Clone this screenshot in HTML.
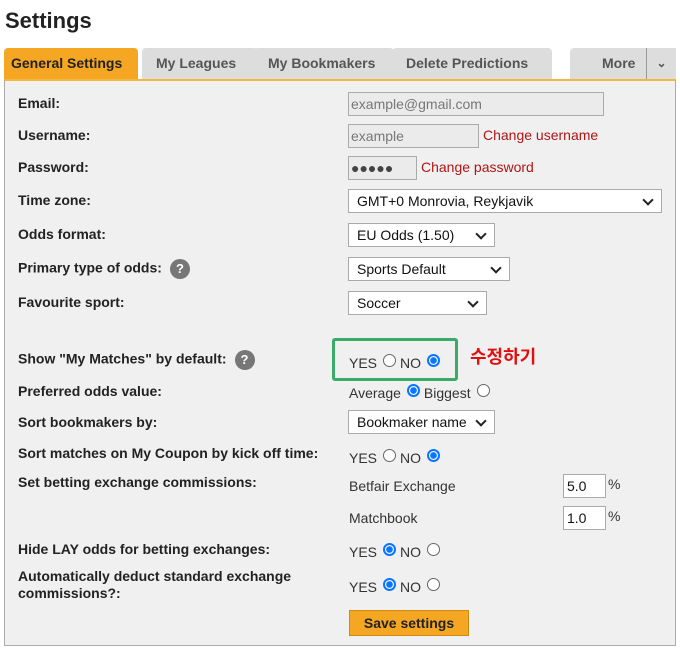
<!DOCTYPE html>
<html><head><meta charset="utf-8"><style>
*{box-sizing:border-box;margin:0;padding:0}
body{width:680px;height:652px;background:#fff;font-family:"Liberation Sans",Arial,sans-serif;position:relative;overflow:hidden;color:#222}
.a{position:absolute;white-space:nowrap}
h1{position:absolute;left:5px;top:8px;font-size:22px;font-weight:bold;color:#222}
.tab{position:absolute;top:48px;height:32px;background:#ddd;color:#555;font-weight:bold;font-size:14px;line-height:30px;padding-left:14px;border-radius:4px 4px 0 0}
.panel{position:absolute;left:4px;top:79px;width:672px;height:567px;background:#f0f0f0;border:1px solid #aaa;border-top:2px solid #f5b73b}
.l{position:absolute;left:18px;font-weight:bold;font-size:14px;color:#222;white-space:nowrap}
.in{position:absolute;height:24px;border:1px solid #aaa;background:#ebebeb;color:#777;font-size:14px;line-height:22px;padding-left:2px}
.sel{position:absolute;height:24px;border:1px solid #aaa;background:#fff;color:#111;font-size:14px;line-height:22px;padding-left:8px}
.sel:after{content:"";position:absolute;right:9px;top:6px;width:6px;height:6px;border-right:2px solid #222;border-bottom:2px solid #222;transform:rotate(45deg)}
.box{position:absolute;height:24px;border:1px solid #aaa;background:#fff;color:#111;font-size:14px;line-height:22px;padding-left:3px}
.red{position:absolute;color:#b01515;font-size:14px}
.t{position:absolute;font-size:14px;color:#333;white-space:nowrap}
.r{display:inline-block;width:13px;height:13px;border:1px solid #666;border-radius:50%;background:#fff;vertical-align:1px;margin:0 4px 0 6px}
.r.on{border:2px solid #0a75ff;background:radial-gradient(circle,#0a75ff 3px,#fff 3.6px)}
.q{display:inline-block;width:20px;height:20px;border-radius:50%;background:#777;color:#fff;font-size:13px;text-align:center;line-height:20px;vertical-align:middle;margin-left:8px}
</style></head><body>
<h1>Settings</h1>
<div class="tab" style="left:570px;width:78px;padding-left:32px;background:#ddd">More</div>
<div class="tab" style="left:646px;width:30px;padding:0;text-align:center;border-left:1px solid #999;border-radius:0;background:#ddd;font-size:12px">&#8964;</div>
<div class="tab" style="left:392px;width:160px">Delete Predictions</div>
<div class="tab" style="left:254px;width:140px">My Bookmakers</div>
<div class="tab" style="left:142px;width:116px">My Leagues</div>
<div class="tab" style="left:4px;width:134px;background:#f5a623;color:#222;padding-left:7px">General Settings</div>
<div class="panel"></div>

<div class="l" style="top:95px">Email:</div>
<div class="in" style="left:348px;top:92px;width:256px">example@gmail.com</div>
<div class="l" style="top:127px">Username:</div>
<div class="in" style="left:348px;top:124px;width:131px">example</div>
<div class="red" style="left:483px;top:127px">Change username</div>
<div class="l" style="top:159px">Password:</div>
<div class="in" style="left:348px;top:156px;width:69px;color:#444">●●●●●</div>
<div class="red" style="left:421px;top:159px">Change password</div>
<div class="l" style="top:192px">Time zone:</div>
<div class="sel" style="left:348px;top:189px;width:314px">GMT+0 Monrovia, Reykjavik</div>
<div class="l" style="top:226px">Odds format:</div>
<div class="sel" style="left:348px;top:223px;width:147px">EU Odds (1.50)</div>
<div class="l" style="top:259px">Primary type of odds:<span class="q">?</span></div>
<div class="sel" style="left:348px;top:257px;width:162px">Sports Default</div>
<div class="l" style="top:294px">Favourite sport:</div>
<div class="sel" style="left:348px;top:291px;width:139px">Soccer</div>

<div class="l" style="top:350px">Show "My Matches" by default:<span class="q">?</span></div>
<div class="a" style="left:332px;top:338px;width:126px;height:43px;border:3px solid #3aaa6a;border-radius:3px"></div>
<div class="t" style="left:349px;top:354px">YES<span class="r"></span>NO<span class="r on"></span></div>
<div class="a" style="left:470px;top:343px;color:#e01010;font-size:18px;font-weight:bold;font-family:'Noto Sans CJK KR',sans-serif">수정하기</div>
<div class="l" style="top:383px">Preferred odds value:</div>
<div class="t" style="left:349px;top:384px">Average<span class="r on"></span>Biggest<span class="r"></span></div>
<div class="l" style="top:414px">Sort bookmakers by:</div>
<div class="sel" style="left:348px;top:410px;width:147px">Bookmaker name</div>
<div class="l" style="top:445px">Sort matches on My Coupon by kick off time:</div>
<div class="t" style="left:349px;top:449px">YES<span class="r"></span>NO<span class="r on"></span></div>
<div class="l" style="top:474px">Set betting exchange commissions:</div>
<div class="t" style="left:349px;top:478px">Betfair Exchange</div>
<div class="box" style="left:563px;top:474px;width:43px">5.0</div><div class="t" style="left:608px;top:476px">%</div>
<div class="t" style="left:349px;top:510px">Matchbook</div>
<div class="box" style="left:563px;top:506px;width:43px">1.0</div><div class="t" style="left:608px;top:508px">%</div>
<div class="l" style="top:541px">Hide LAY odds for betting exchanges:</div>
<div class="t" style="left:349px;top:543px">YES<span class="r on"></span>NO<span class="r"></span></div>
<div class="l" style="top:568px;line-height:17px">Automatically deduct standard exchange<br>commissions?:</div>
<div class="t" style="left:349px;top:578px">YES<span class="r on"></span>NO<span class="r"></span></div>
<div class="a" style="left:349px;top:610px;width:120px;height:26px;background:#f5a623;border:1px solid #d08a10;font-weight:bold;font-size:14px;line-height:24px;text-align:center;color:#222">Save settings</div>
</body></html>
